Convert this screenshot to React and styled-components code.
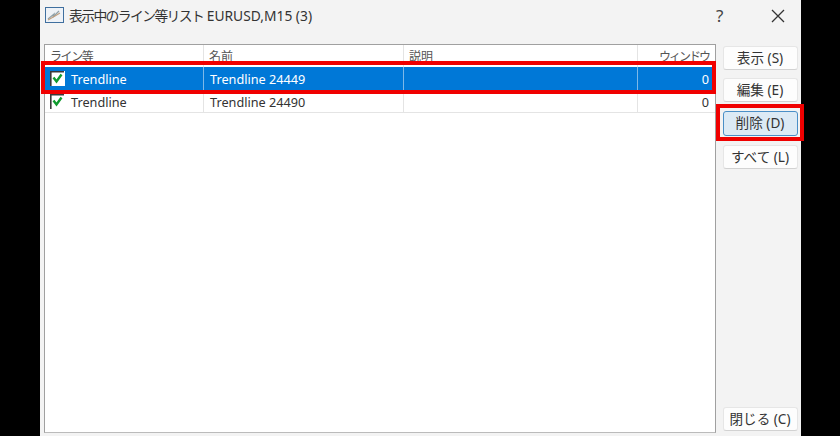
import React from 'react';
import styled, { createGlobalStyle } from 'styled-components';

const GlobalStyle = createGlobalStyle`
  html, body {
    margin: 0;
    width: 840px;
    height: 436px;
    overflow: hidden;
    background: #000;
    font-family: "Noto Sans", "Noto Sans CJK JP", sans-serif;
  }
`;

const Page = styled.div`
  width: 840px;
  height: 436px;
  padding-left: 40px;
  box-sizing: border-box;
`;

const Dialog = styled.div`
  position: relative;
  width: 761px;
  height: 436px;
  background: #f3f3f3;
  display: flex;
  flex-direction: column;
`;

const TitleBar = styled.div`
  height: 44px;
  flex: none;
  display: flex;
  align-items: flex-start;
  padding: 7px 0 0 5px;
  box-sizing: border-box;
  color: #333;
  font-size: 13.8px;
  line-height: 18px;
`;

const TitleText = styled.span`
  margin-left: 5px;
  flex: 1;
  white-space: nowrap;
`;

const Narrow = styled.span`
  letter-spacing: ${(p) => p.$spacing}px;
`;

const HelpMark = styled.span`
  width: 14px;
  font-size: 17px;
  color: #444;
  margin-right: 41px;
  line-height: 18px;
`;

const CloseMark = styled.svg`
  width: 14px;
  height: 14px;
  margin: 2px 16px 0 0;
`;

const Body = styled.div`
  display: flex;
  padding-left: 4px;
  height: 389px;
`;

const ListBox = styled.div`
  width: 672px;
  height: 389px;
  box-sizing: border-box;
  background: #fff;
  border: 1px solid #a0a0a0;
  border-bottom-color: #bbb;
  color: #333;
`;

const Row = styled.div`
  display: grid;
  grid-template-columns: 159px 200px 234px 1fr;
  height: ${(p) => p.$height}px;
  box-sizing: border-box;
  background: ${(p) => (p.$selected ? '#0078d7' : '#fff')};
  color: ${(p) => (p.$selected ? '#fff' : '#333')};
  border-bottom: ${(p) => (p.$header ? 'none' : '1px solid #e4e4e4')};
  overflow: hidden;
`;

const Cell = styled.div`
  display: flex;
  align-items: ${(p) => (p.$header ? 'flex-start' : 'center')};
  justify-content: ${(p) => (p.$right ? 'flex-end' : 'flex-start')};
  padding: ${(p) => (p.$header ? '2px 6px 0 5px' : '0 6px 2px 6px')};
  border-right: ${(p) => (p.$last ? 'none' : `1px solid ${p.$selected ? '#7db8e8' : '#e4e4e4'}`)};
  font-size: ${(p) => (p.$header ? '12px' : '12.7px')};
  letter-spacing: ${(p) => p.$spacing || 0}px;
  color: ${(p) => (p.$header ? '#555' : 'inherit')};
  white-space: nowrap;
  overflow: hidden;
`;

const Check = styled.svg`
  width: 15px;
  height: 15px;
  flex: none;
  margin: 0 6px 1px -1px;
`;

const Side = styled.div`
  flex: 1;
  display: flex;
  flex-direction: column;
  padding: 2px 0 0 7px;
`;

const Button = styled.div`
  width: 75px;
  height: ${(p) => p.$height || 24}px;
  margin-bottom: ${(p) => p.$gap || 0}px;
  flex: none;
  box-sizing: border-box;
  display: flex;
  align-items: center;
  justify-content: center;
  padding: 0 1px 3px 0;
  border-radius: 3px;
  font-size: 13.6px;
  color: #333;
  background: ${(p) => (p.$active ? '#dceaf5' : '#fdfdfd')};
  border: 1px solid ${(p) => (p.$active ? '#4a8fc7' : '#e6e6e6')};
  border-bottom-color: ${(p) => (p.$active ? '#4a8fc7' : '#d2d2d2')};
`;

const Spacer = styled.div`
  flex: 1;
`;

const RedFrame = styled.div`
  position: absolute;
  left: ${(p) => p.$left}px;
  top: ${(p) => p.$top}px;
  width: ${(p) => p.$width}px;
  height: ${(p) => p.$height}px;
  box-sizing: border-box;
  border: 4px solid #f00000;
  pointer-events: none;
`;

const AppIcon = () => (
  <svg width="19" height="16" viewBox="0 0 19 16" style={{ flex: 'none' }}>
    <rect x="0.5" y="0.5" width="18" height="15" fill="#eef2f7" stroke="#3f6f9f" />
    <path d="M3 12 L9 7 L8 10 L14 4" fill="none" stroke="#8fa0a8" strokeWidth="1.2" />
    <path d="M3 13 L10 9 L15 6" fill="none" stroke="#c0a080" strokeWidth="1.2" />
  </svg>
);

const CheckIcon = () => (
  <Check viewBox="0 0 15 15">
    <rect x="0" y="0" width="15" height="15" fill="#fff" />
    <path d="M0.8 15 V0.8 H14" fill="none" stroke="#3a3a3a" strokeWidth="1.6" />
    <path d="M3.5 6.5 L6.5 10.5 L11.5 3.5" fill="none" stroke="#0f9a2e" strokeWidth="2.4" />
  </Check>
);

const rows = [
  { type: 'Trendline', name: 'Trendline 24449', value: '0', selected: true },
  { type: 'Trendline', name: 'Trendline 24490', value: '0', selected: false },
];

const App = () => (
  <Page>
    <GlobalStyle />
    <Dialog>
      <TitleBar>
        <AppIcon />
        <TitleText>
          <Narrow $spacing={-1.6}>表示中のライン等リスト</Narrow> EURUSD,M15 (3)
        </TitleText>
        <HelpMark>?</HelpMark>
        <CloseMark viewBox="0 0 14 14">
          <path d="M1 1 L13 13 M13 1 L1 13" stroke="#333" strokeWidth="1.3" fill="none" />
        </CloseMark>
      </TitleBar>
      <Body>
        <ListBox>
          <Row $header $height={22}>
            <Cell $header $spacing={-1.4}>ライン等</Cell>
            <Cell $header>名前</Cell>
            <Cell $header>説明</Cell>
            <Cell $header $right $last $spacing={-2}>ウィンドウ</Cell>
          </Row>
          {rows.map((row) => (
            <Row key={row.name} $height={row.selected ? 26 : 20} $selected={row.selected}>
              <Cell $selected={row.selected}>
                <CheckIcon />
                {row.type}
              </Cell>
              <Cell $selected={row.selected}>{row.name}</Cell>
              <Cell $selected={row.selected} />
              <Cell $right $last>{row.value}</Cell>
            </Row>
          ))}
        </ListBox>
        <Side>
          <Button $gap={8}>表示 (S)</Button>
          <Button $gap={9}>編集 (E)</Button>
          <Button $gap={9} $height={25} $active>削除 (D)</Button>
          <Button>すべて (L)</Button>
          <Spacer />
          <Button $gap={2}>閉じる (C)</Button>
        </Side>
      </Body>
      <RedFrame $left={1} $top={61} $width={675} $height={33} />
      <RedFrame $left={676} $top={104} $width={88} $height={37} />
    </Dialog>
  </Page>
);

export default App;
